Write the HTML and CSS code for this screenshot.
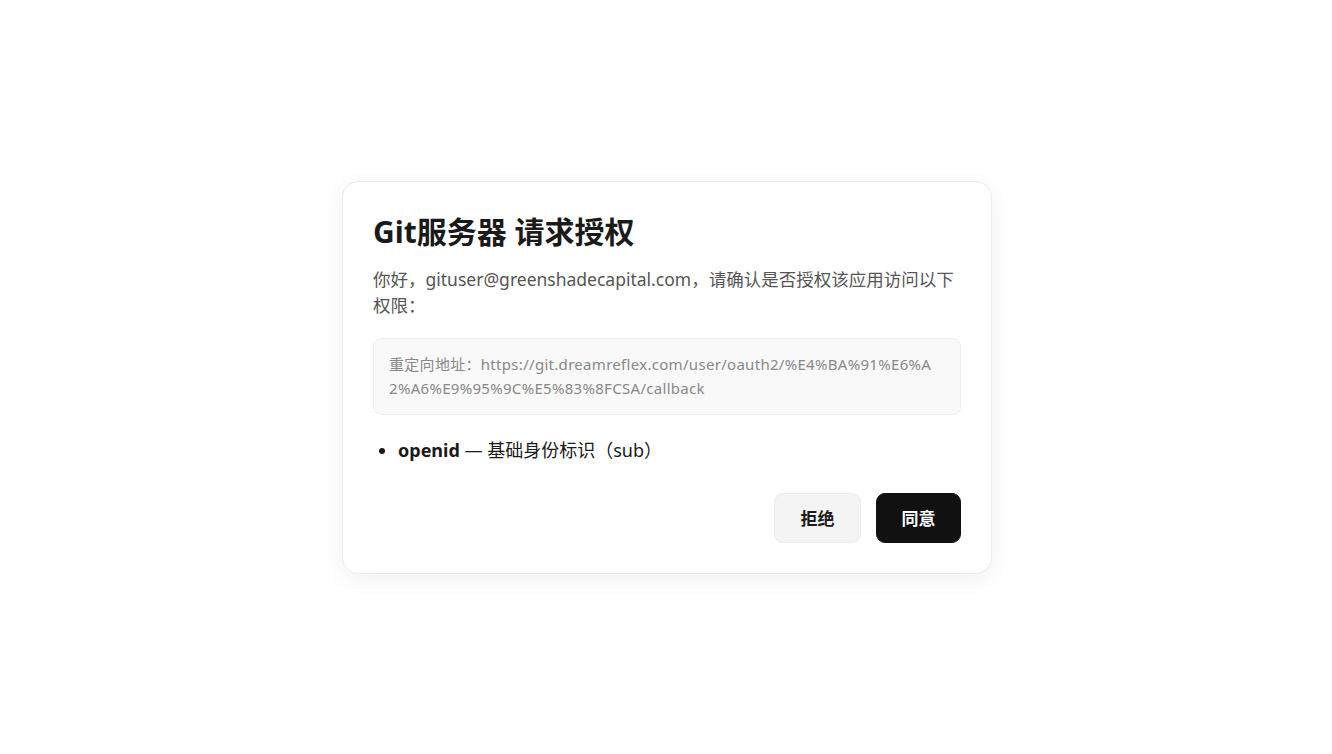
FILE: index.html
```html
<!DOCTYPE html>
<html lang="zh-CN">
<head>
<meta charset="utf-8">
<title>授权</title>
<link rel="stylesheet" href="styles.css">
</head>
<body>
<div class="page">
  <div class="card">
    <h1 class="title">Git服务器 请求授权</h1>
    <p class="intro">你好，gituser@greenshadecapital.com，请确认是否授权该应用访问以下权限：</p>
    <div class="redirect">重定向地址：https://git.dreamreflex.com/user/oauth2/%E4%BA%91%E6%A2%A6%E9%95%9C%E5%83%8FCSA/callback</div>
    <ul class="scopes">
      <li><strong>openid</strong> — 基础身份标识（sub）</li>
    </ul>
    <div class="actions">
      <button class="btn btn-deny">拒绝</button>
      <button class="btn btn-allow">同意</button>
    </div>
  </div>
</div>
</body>
</html>
```

FILE: styles.css
```css
* { box-sizing: border-box; }
html, body { margin: 0; padding: 0; background: #fff; }
body {
  font-family: "Noto Sans", "Noto Sans CJK SC", sans-serif;
  color: #1a1a1a;
}
.page {
  height: 754px;
  padding-left: 2px;
  display: flex;
  align-items: center;
  justify-content: center;
}
.card {
  width: 650px;
  background: #fff;
  border: 1px solid #ececec;
  border-radius: 16px;
  box-shadow: 0 6px 24px rgba(0,0,0,0.06);
  padding: 29px 30px 30px;
}
.title {
  margin: 0;
  font-size: 30px;
  line-height: 41px;
  font-weight: 700;
  color: #1a1a1a;
}
.intro {
  margin: 14px 0 0;
  font-size: 17.5px;
  line-height: 26px;
  color: #555;
}
.redirect {
  margin-top: 20px;
  background: #f9f9f9;
  border: 1px solid #efefef;
  border-radius: 8px;
  padding: 13px 15px 14px;
  font-size: 15px;
  line-height: 24px;
  letter-spacing: 0.3px;
  color: #888;
  word-break: break-all;
}
.scopes {
  margin: 22px 0 0;
  padding-left: 25px;
  font-size: 18px;
  line-height: 26px;
  color: #1a1a1a;
}
.scopes strong { font-weight: 700; }
.actions {
  margin-top: 30px;
  display: flex;
  justify-content: flex-end;
  gap: 15px;
}
.btn {
  height: 50px;
  padding: 0;
  border-radius: 9px;
  font-family: inherit;
  font-size: 17px;
  font-weight: 700;
  cursor: pointer;
}
.btn-deny {
  background: #f4f4f4;
  border: 1px solid #ececec;
  color: #1a1a1a;
  width: 87px;
}
.btn-allow {
  background: #111;
  border: 1px solid #111;
  color: #fff;
  width: 85px;
}
```
